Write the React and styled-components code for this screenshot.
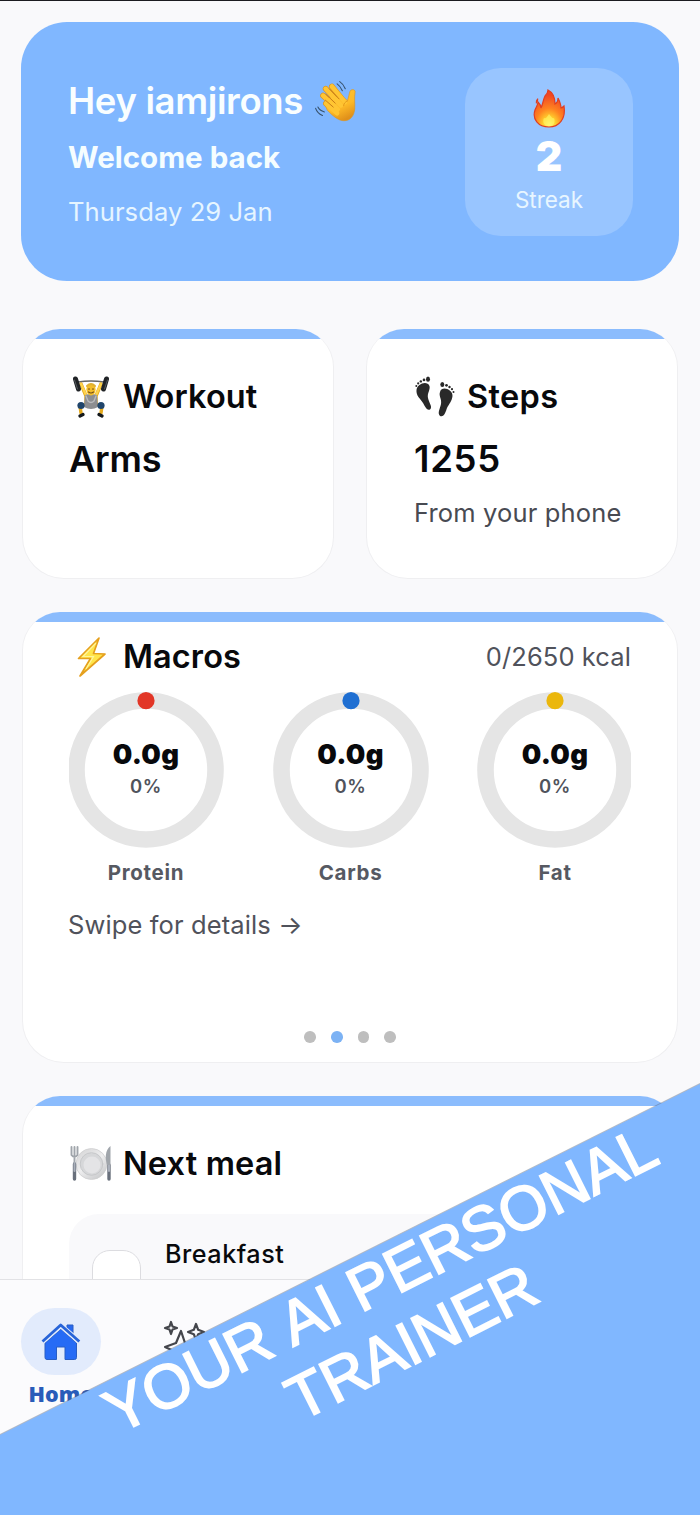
import React from "react";
import styled, { createGlobalStyle } from "styled-components";

const macros = [
    { nome: "Protein", valor: "0.0g", porcento: "0%", cor: "#e23627" },
    { nome: "Carbs", valor: "0.0g", porcento: "0%", cor: "#1f6fd2" },
    { nome: "Fat", valor: "0.0g", porcento: "0%", cor: "#ebb70c" },
];

function Wave() {
    return (
        <svg width="43" height="43" viewBox="42 40 132 132" fill="none" strokeLinecap="round">
            <defs>
                <linearGradient id="hand" x1="70" y1="50" x2="130" y2="165" gradientUnits="userSpaceOnUse">
                    <stop offset="0" stopColor="#ffc83a" />
                    <stop offset="0.7" stopColor="#fdb927" />
                    <stop offset="1" stopColor="#e0901a" />
                </linearGradient>
            </defs>
            <g stroke="#dc9520" strokeWidth="18">
                <path d="M97 60L132 103M78 67L122 112M70 88L112 126M79 112L110 138" />
            </g>
            <path d="M126 91L145 103C148 92 150 83 152 76C155 66 171 68 168 79C165 93 168 109 167 129C165 151 153 165 134 165C118 165 103 153 83 133L77 119L88 94Z" fill="url(#hand)" stroke="#dc9520" strokeWidth="2" />
            <g stroke="#ffc533" strokeWidth="14">
                <path d="M97 60L137 108M78 67L125 118M70 88L115 130M79 112L113 142" />
            </g>
            <path d="M89 67L119 98M78 83L107 111M77 102L101 123" stroke="#c77c19" strokeWidth="3" />
            <path d="M145 104C137 107 133 113 133 119" stroke="#e39a1c" strokeWidth="3" />
            <path d="M121 45Q133 53 138 67M113 52Q123 59 129 73M54 123Q59 134 74 138M47 127Q52 142 68 149" stroke="#38536f" strokeWidth="3.4" />
        </svg>
    );
}

function Flame() {
    return (
        <svg width="32" height="39" viewBox="0 0 32 39">
            <defs>
                <radialGradient id="fire" cx="0.5" cy="0.95" r="0.82">
                    <stop offset="0" stopColor="#fff875" />
                    <stop offset="0.25" stopColor="#ffd22d" />
                    <stop offset="0.55" stopColor="#ff8320" />
                    <stop offset="1" stopColor="#ef4623" />
                </radialGradient>
            </defs>
            <path d="M15 1C21 4 22 10 22 15C24 14 25 11 25 9C27 13 28 16 28 19C29 19 30 18 31 17C33 30 26 38 16 38C5 38 -1 30 2 21C3 18 5 16 5 13C7 15 8 17 8 19C10 15 10 11 12 7C14 5 15 3 15 1Z" fill="url(#fire)" stroke="#e03f20" strokeWidth="1.2" />
            <path d="M5 9Q2 11 3 15Q6 12 5 9Z" fill="#e03f20" />
            <path d="M16 25C18 27 19 30 21 29C23 34 20 37 16 37C11 37 9 33 11 29C13 30 14 28 16 25Z" fill="#fff66a" opacity="0.6" />
        </svg>
    );
}

function Lifter() {
    return (
        <svg width="42" height="42" viewBox="0 0 42 42" fill="none" strokeLinecap="round" strokeLinejoin="round">
            <path d="M8 6Q21 4 34 6" stroke="#666" strokeWidth="1.3" />
            <path d="M11 8L16 20L16 28L10 30L11 37M31 8L26 20L26 28L32 30L31 37" stroke="#e4a91c" strokeWidth="3.4" />
            <path d="M11 8L16 19M31 8L26 19" stroke="#ffd34c" strokeWidth="2.4" />
            <path d="M15 19Q21 17 27 19L28 31Q21 35 14 31Z" fill="#8d8e91" />
            <path d="M16 20L18 25Q21 28 24 25L26 20" stroke="#b9babd" strokeWidth="1.4" />
            <ellipse cx="21" cy="13.5" rx="4.6" ry="6" fill="#f3bd2a" />
            <path d="M17 10Q21 6 25 10" stroke="#e0b030" strokeWidth="2" />
            <path d="M18.500 13H19.500M22.500 13H23.500M18.500 16Q21 18 23.500 16" stroke="#714b17" strokeWidth="1.2" />
            <g stroke="#202326">
                <path d="M5.500 3L8.500 13" strokeWidth="5" />
                <path d="M36.500 3L33.500 13" strokeWidth="5" />
            </g>
            <path d="M4.500 4L7.500 13M37.500 4L34.500 13" stroke="#555b60" strokeWidth="1" />
            <circle cx="11" cy="29.500" r="3.600" fill="#20456b" />
            <circle cx="31" cy="29.500" r="3.600" fill="#20456b" />
            <path d="M13 38.500L10 40M29 38.500L32 40" stroke="#15191c" strokeWidth="3.200" />
        </svg>
    );
}

function Feet() {
    return (
        <svg width="42" height="42" viewBox="0 0 42 42" fill="#292929">
            <path d="M2.500 14C3 8 13 4 15.500 10C16.500 14 13 17 14 22C15 27 19 31 16 33.500C12.500 35 11 30 9 27C6 22 2 20 2.500 14Z" />
            <ellipse cx="14" cy="3.200" rx="2" ry="2.600" />
            <circle cx="10" cy="3.900" r="1.350" />
            <circle cx="6.800" cy="5.400" r="1.200" />
            <circle cx="4.200" cy="7.400" r="1.100" />
            <circle cx="2.300" cy="10" r="1" />
            <path d="M38.500 20C39 14 28 9 26 16C24.500 20 28 23 27 28C26 33 23 37 26 40C30 42 32 35 33 32C35 28 38 25 38.500 20Z" />
            <ellipse cx="28.300" cy="8.500" rx="2" ry="2.600" />
            <circle cx="32.500" cy="9.300" r="1.350" />
            <circle cx="35.500" cy="11" r="1.200" />
            <circle cx="38" cy="13.200" r="1.100" />
            <circle cx="39.500" cy="16" r="1" />
        </svg>
    );
}

function Bolt() {
    return (
        <svg width="42" height="42" viewBox="0 0 42 42">
            <path d="M29 2L8.500 22.500L20.500 22.500L10 40L35 18L23.500 17.500Z" fill="#ffe54b" stroke="#e5a01e" strokeWidth="1.700" strokeLinejoin="round" />
            <path d="M26 7L13 20.500L23.500 20.500L16 33" fill="none" stroke="#fff59b" strokeWidth="1.200" />
        </svg>
    );
}

function Plate() {
    return (
        <svg width="42" height="42" viewBox="0 0 42 42" fill="none" strokeLinecap="round">
            <defs>
                <linearGradient id="dish" x1="10" y1="5" x2="32" y2="36" gradientUnits="userSpaceOnUse">
                    <stop stopColor="#d4d4d5" />
                    <stop offset="0.5" stopColor="#eeeeef" />
                    <stop offset="1" stopColor="#c7c8ca" />
                </linearGradient>
            </defs>
            <circle cx="21.500" cy="21" r="15.500" fill="url(#dish)" stroke="#cfcfd1" strokeWidth="0.8" />
            <circle cx="21.500" cy="21" r="11.300" fill="#d6d7d9" stroke="#c2c3c5" strokeWidth="0.8" />
            <circle cx="22" cy="22" r="8.500" fill="#e4e4e6" />
            <path d="M1.500 4V12Q4.500 16 7.500 12V4M4.500 4V20" stroke="#a0a5ab" strokeWidth="1.900" />
            <path d="M4.500 21V36M39 22V36" stroke="#69707c" strokeWidth="3.400" />
            <path d="M4.500 20V28M39 22V28" stroke="#a9afba" strokeWidth="2" />
            <path d="M40.500 3C35 7 35 15 37 22H40.500Z" fill="#a0a5ab" />
        </svg>
    );
}

function House() {
    return (
        <svg width="40" height="40" viewBox="0 0 40 40">
            <path d="M26 3H32V13L26 8Z" fill="#2869ef" stroke="#285ec5" />
            <path d="M20 7L35.500 21V35.500Q35.500 37.500 33.500 37.500H24V25H15.500V37.500H6Q4 37.500 4 35.500V21Z" fill="#266bf5" stroke="#285ec5" />
            <path d="M1.500 19.500L19.700 3.500L38.300 19.500" fill="none" stroke="#e2ebfc" strokeWidth="5" />
            <path d="M1.500 19.500L19.700 3L38.300 19.500" fill="none" stroke="#2864d8" strokeWidth="2.800" strokeLinejoin="round" />
        </svg>
    );
}

function Sparkles() {
    return (
        <svg width="48" height="48" viewBox="0 0 48 48" fill="none" stroke="#44464c" strokeWidth="2.200" strokeLinejoin="round">
            <path d="M8 2L9.500 6.500L14 8L9.500 9.500L8 14L6.500 9.500L2 8L6.500 6.500Z" />
            <path d="M33 4L35.200 9.800L41 12L35.200 14.200L33 20L30.800 14.200L25 12L30.800 9.800Z" />
            <path d="M18 11L22 23L34 27L23 32L18 44L13 32L2 27L13 23Z" />
        </svg>
    );
}

function Anel({ macro }) {
    return (
        <Macro>
            <ConteinerAnel>
                <svg width="156" height="156" viewBox="0 0 156 156">
                    <circle cx="78" cy="78" r="69.500" fill="none" stroke="#e5e5e5" strokeWidth="16.600" />
                    <circle cx="78" cy="8.700" r="8.600" fill={macro.cor} />
                </svg>
                <ValorAnel>
                    <Texto tamanho={27.5} peso={900} linha={32} espaco={0.3}>{macro.valor}</Texto>
                    <Texto tamanho={18.5} peso={600} linha={32} espaco={0.7} cor="#50535c">{macro.porcento}</Texto>
                </ValorAnel>
            </ConteinerAnel>
            <Texto tamanho={20.5} peso={700} linha={50} espaco={0.7} cor="#565962">{macro.nome}</Texto>
        </Macro>
    );
}

function App() {
    return (
        <Pagina>
            <GlobalStyle />
            <Conteudo>
                <Saudacao>
                    <div>
                        <Linha gap={11}>
                            <Texto tamanho={36.5} peso={600} linha={56} espaco={-0.35} cor="#f9feff">Hey iamjirons</Texto>
                            <Wave />
                        </Linha>
                        <Texto tamanho={29.5} peso={700} linha={57} espaco={0} cor="#f5fdff">Welcome back</Texto>
                        <Texto tamanho={25.6} peso={400} linha={51} espaco={0.05} cor="#e6f5ff">Thursday 29 Jan</Texto>
                    </div>
                    <Streak>
                        <Flame />
                        <Texto tamanho={41} peso={900} linha={57} cor="#fff">2</Texto>
                        <Texto tamanho={22.5} peso={400} linha={30} espaco={0} cor="#e8f6ff">Streak</Texto>
                    </Streak>
                </Saudacao>

                <Grade>
                    <Cartao altura={250} topo={35}>
                        <Titulo icone={<Lifter />}>Workout</Titulo>
                        <Texto tamanho={36} peso={600} linha={77} espaco={-0.2}>Arms</Texto>
                    </Cartao>
                    <Cartao altura={250} topo={35}>
                        <Titulo icone={<Feet />} espaco={0.35}>Steps</Titulo>
                        <Destaque>
                            <Texto tamanho={36.5} peso={600} linha={77} espaco={0.7}>1255</Texto>
                            <Texto tamanho={25.5} peso={400} linha={30} espaco={0.15} cor="#484a52">From your phone</Texto>
                        </Destaque>
                    </Cartao>
                </Grade>

                <Cartao altura={451} topo={12}>
                    <Cabecalho>
                        <Titulo icone={<Bolt />}>Macros</Titulo>
                        <Texto tamanho={25.5} peso={400} linha={48} espaco={0.1} cor="#50525b">0/2650 kcal</Texto>
                    </Cabecalho>
                    <Aneis>
                        <Trilho>
                            {macros.map((macro) => <Anel macro={macro} key={macro.nome} />)}
                        </Trilho>
                    </Aneis>
                    <Swipe tamanho={25.5} peso={400} linha={54} espaco={0.12} cor="#50525b">Swipe for details →</Swipe>
                    <Pontos>
                        <Ponto />
                        <Ponto ativo="sim" />
                        <Ponto />
                        <Ponto />
                    </Pontos>
                </Cartao>

                <Cartao altura={450} topo={35}>
                    <Titulo icone={<Plate />} espaco={0.15}>Next meal</Titulo>
                    <Refeicao>
                        <Caixa />
                        <Texto tamanho={25.2} peso={500} linha={30} espaco={0.5}>Breakfast</Texto>
                    </Refeicao>
                </Cartao>
            </Conteudo>

            <Menu>
                <Item>
                    <Ativo><House /></Ativo>
                    <Rotulo>Home</Rotulo>
                </Item>
                <Item>
                    <Sparkles />
                </Item>
            </Menu>

            <Sombra>
                <Faixa>
                    <Slogan>YOUR AI PERSONAL<br />TRAINER</Slogan>
                </Faixa>
            </Sombra>
        </Pagina>
    );
}

function Titulo({ icone, espaco = 0.1, children }) {
    return (
        <Linha gap={11} recuo={1}>
            {icone}
            <Texto tamanho={32.5} peso={600} linha={48} espaco={espaco}>{children}</Texto>
        </Linha>
    );
}

export default App;

const GlobalStyle = createGlobalStyle`
* {
    box-sizing: border-box;
}
body {
    margin: 0;
    font-family: 'Inter', sans-serif;
}
svg {
    display: block;
    flex-shrink: 0;
}
`
const Pagina = styled.div`
position: relative;
width: 700px;
height: 1515px;
overflow: hidden;
background: #f9f9fb;
border-top: 1px solid #1c1c20;
display: flex;
flex-direction: column;
`
const Conteudo = styled.main`
height: 1278px;
flex-shrink: 0;
overflow: hidden;
padding: 21px 22px 0;
display: flex;
flex-direction: column;
gap: 33px;
`
const Saudacao = styled.section`
height: 259px;
flex-shrink: 0;
margin: 0 -1px 15px;
padding: 46px 46px 46px 47px;
border-radius: 46px;
background: #80b7ff;
display: flex;
justify-content: space-between;
align-items: flex-start;

> div:first-child {
    padding-top: 5px;
}
`
const Streak = styled.div`
width: 168px;
height: 168px;
padding-top: 21px;
border-radius: 36px;
background: #98c5ff;
display: flex;
flex-direction: column;
align-items: center;
`
const Texto = styled.div`
font-size: ${(props) => props.tamanho}px;
font-weight: ${(props) => props.peso};
line-height: ${(props) => props.linha}px;
letter-spacing: ${(props) => props.espaco || 0}px;
color: ${(props) => props.cor || "#08090c"};
white-space: nowrap;
`
const Swipe = styled(Texto)`
margin-left: -1px;
`
const Linha = styled.div`
padding-left: ${(props) => props.recuo || 0}px;
display: flex;
align-items: center;
gap: ${(props) => props.gap}px;
`
const Destaque = styled.div`
padding-left: 1px;
`
const Grade = styled.div`
display: grid;
grid-template-columns: 1fr 1fr;
gap: 32px;
flex-shrink: 0;
`
const Cartao = styled.section`
height: ${(props) => props.altura}px;
flex-shrink: 0;
padding: ${(props) => props.topo}px 46px 0;
border: 1px solid #efeff1;
border-top: 0;
border-radius: 38px 38px 42px 42px;
overflow: hidden;
background: #fff;

&::before {
    content: "";
    display: block;
    height: 9.5px;
    margin: -${(props) => props.topo}px -46px ${(props) => props.topo - 0.5}px;
    background: #8bbcfd;
}
`
const Cabecalho = styled.div`
display: flex;
justify-content: space-between;
align-items: center;
`
const Aneis = styled.div`
margin-top: 11px;
overflow: hidden;
`
const Trilho = styled.div`
margin: 0 -2px 0 -1px;
display: flex;
justify-content: space-between;
`
const Macro = styled.div`
display: flex;
flex-direction: column;
align-items: center;
`
const ConteinerAnel = styled.div`
display: grid;
place-items: center;

> * {
    grid-area: 1 / 1;
}
`
const ValorAnel = styled.div`
display: flex;
flex-direction: column;
align-items: center;
`
const Pontos = styled.div`
margin-top: 79px;
display: flex;
justify-content: center;
gap: 15px;
`
const Ponto = styled.div`
width: 11.7px;
height: 11.7px;
border-radius: 50%;
background: ${(props) => props.ativo ? "#7cb2f4" : "#bebebe"};
`
const Refeicao = styled.div`
height: 160px;
margin-top: 26px;
padding: 25px 23px;
border-radius: 30px;
background: #f9f9fb;
display: flex;
gap: 24px;
`
const Caixa = styled.div`
width: 49px;
height: 49px;
margin-top: 11px;
border: 1.5px solid #dcdce0;
border-radius: 18px;
background: #fff;
`
const Menu = styled.nav`
height: 236px;
flex-shrink: 0;
padding: 28px 21px;
border-top: 1px solid #e2e2e5;
background: #fbfbfd;
display: flex;
gap: 62px;
`
const Item = styled.div`
display: flex;
flex-direction: column;
align-items: center;

> svg {
    margin-top: 12px;
}
`
const Ativo = styled.div`
width: 80px;
height: 67px;
border-radius: 34px;
background: #e2ebfc;
display: flex;
justify-content: center;
align-items: center;
`
const Rotulo = styled.div`
margin-top: 4px;
font-family: 'Open Sans', sans-serif;
font-size: 21.5px;
font-weight: 800;
line-height: 30px;
color: #295bb9;
`
const Sombra = styled.div`
position: absolute;
left: 0;
right: 0;
bottom: 0;
filter: drop-shadow(0 -1px 0 rgba(90, 105, 125, 0.45));
`
const Faixa = styled.div`
height: 432px;
background: #80b7ff;
clip-path: polygon(0 352px, 100% 1px, 100% 100%, 0 100%);
display: flex;
justify-content: center;
align-items: center;
`
const Slogan = styled.div`
font-family: 'Liberation Sans', Arial, sans-serif;
font-size: 61.8px;
font-kerning: none;
line-height: 69.5px;
text-align: center;
white-space: nowrap;
color: #fff;
-webkit-text-stroke: 1.8px #fff;
transform: translate(46px, 11px) rotate(-26.6deg);
`
